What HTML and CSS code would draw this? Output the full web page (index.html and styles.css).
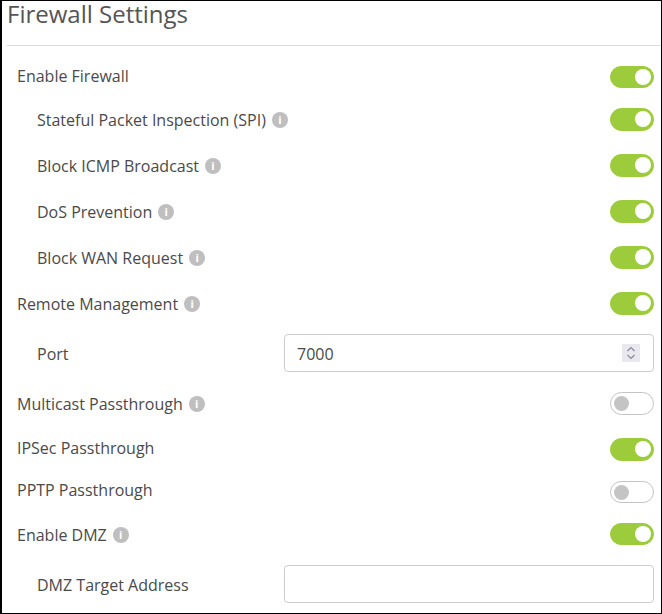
FILE: index.html
```html
<!DOCTYPE html>
<html lang="en">
<head>
  <meta charset="UTF-8" />
  <meta name="viewport" content="width=device-width, initial-scale=1.0"/>
  <title>Firewall Settings</title>
  <link rel="stylesheet" href="styles.css">
</head>
<body>
  <div class="panel">
    <h2 class="panel-title">Firewall Settings</h2>

    <div class="settings">
      <div class="row row-short gap-20">
        <span class="label nudge-up">Enable Firewall</span>
        <span class="toggle on"></span>
      </div>
      <div class="row row-sub gap-20">
        <span class="label">Stateful Packet Inspection (SPI)<i class="info">i</i></span>
        <span class="toggle on"></span>
      </div>
      <div class="row row-sub">
        <span class="label">Block ICMP Broadcast<i class="info">i</i></span>
        <span class="toggle on"></span>
      </div>
      <div class="row row-sub">
        <span class="label">DoS Prevention<i class="info">i</i></span>
        <span class="toggle on"></span>
      </div>
      <div class="row row-sub">
        <span class="label">Block WAN Request<i class="info">i</i></span>
        <span class="toggle on"></span>
      </div>
      <div class="row">
        <span class="label">Remote Management<i class="info">i</i></span>
        <span class="toggle on"></span>
      </div>
      <div class="row row-sub row-field">
        <span class="label nudge-down">Port</span>
        <div class="field">
          <span class="field-value">7000</span>
          <span class="spinner">
            <svg width="10" height="16" viewBox="0 0 10 16" fill="none" stroke="#8a8a9c" stroke-width="1.2">
              <path d="M1.5 6 L5 2.5 L8.5 6"/>
              <path d="M1.5 10 L5 13.5 L8.5 10"/>
            </svg>
          </span>
        </div>
      </div>
      <div class="row">
        <span class="label">Multicast Passthrough<i class="info">i</i></span>
        <span class="toggle"></span>
      </div>
      <div class="row">
        <span class="label nudge-up-more">IPSec Passthrough</span>
        <span class="toggle on"></span>
      </div>
      <div class="row row-short gap-20">
        <span class="label nudge-up-more">PPTP Passthrough</span>
        <span class="toggle"></span>
      </div>
      <div class="row row-short gap-20">
        <span class="label nudge-down">Enable DMZ<i class="info">i</i></span>
        <span class="toggle on"></span>
      </div>
      <div class="row row-sub row-field row-last">
        <span class="label nudge-down-more">DMZ Target Address</span>
        <div class="field"></div>
      </div>
    </div>
  </div>
</body>
</html>
```

FILE: styles.css
```css
* {
  box-sizing: border-box;
}

body {
  margin: 0;
  background: #fff;
  font-family: "Open Sans", sans-serif;
  color: #4a4a4a;
}

.panel {
  width: 662px;
  height: 614px;
  overflow: hidden;
  background: #fff;
  border: 1px solid #000;
  border-left-width: 2px;
}

.panel-title {
  margin: 0 0 0 5px;
  height: 45px;
  font-size: 24px;
  line-height: 26px;
  font-weight: 400;
  color: #555;
  border-bottom: 1px solid #ddd;
}

.settings {
  padding: 0 7px 0 15px;
}

.row {
  display: flex;
  justify-content: space-between;
  align-items: center;
  height: 23px;
  margin-top: 23px;
}

.row-short {
  height: 22px;
}

.gap-20 {
  margin-top: 20px;
}

.row-sub {
  padding-left: 20px;
}

.row-field {
  height: 38px;
  margin-top: 19px;
}

.row-field + .row {
  margin-top: 20px;
}

.row-last {
  margin-top: 20px;
}

.label {
  display: flex;
  align-items: center;
  font-size: 16px;
  line-height: 22px;
}

.nudge-up {
  margin-top: -2px;
}

.nudge-up-more {
  margin-top: -4px;
}

.nudge-down {
  margin-top: 2px;
}

.nudge-down-more {
  margin-top: 2px;
}

.info {
  display: inline-block;
  width: 16px;
  height: 16px;
  margin-left: 6px;
  border-radius: 50%;
  background: #bfbfbf;
  color: #fff;
  font-size: 11px;
  font-style: normal;
  font-weight: 700;
  line-height: 16px;
  text-align: center;
}

.toggle {
  position: relative;
  width: 44px;
  height: 100%;
  border: 1px solid #c4c4c4;
  border-radius: 12px;
  background: #fff;
}

.toggle::after {
  content: "";
  position: absolute;
  left: 3px;
  top: 3px;
  width: 15px;
  height: 15px;
  border-radius: 50%;
  background: #c4c4c4;
}

.toggle.on {
  border-color: #9ccc3c;
  background: #9ccc3c;
}

.toggle.on::after {
  left: 24px;
  top: 2px;
  width: 16px;
  height: 16px;
  background: #fff;
}

.field {
  display: flex;
  justify-content: space-between;
  align-items: center;
  width: 370px;
  height: 38px;
  padding: 0 13px 0 12px;
  border: 1px solid #ccc;
  border-radius: 4px;
  font-size: 16px;
}

.field-value {
  margin-top: 2px;
}

.spinner {
  display: flex;
  justify-content: center;
  align-items: center;
  width: 18px;
  height: 18px;
  background: #e9e8ee;
}
```
